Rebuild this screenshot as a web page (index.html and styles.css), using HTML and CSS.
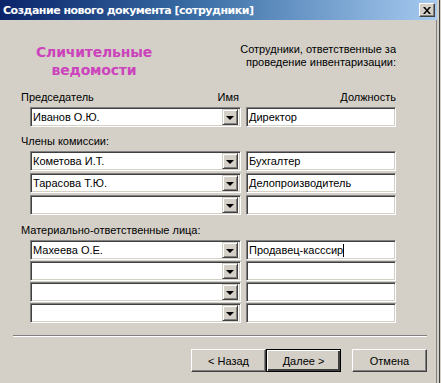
FILE: index.html
```html
<!DOCTYPE html>
<html>
<head>
    <title>Создание нового документа</title>
    <meta charset="utf-8">
    <link rel="stylesheet" href="styles.css">
</head>
<body>
    <div class="window">
        <div class="titlebar">
            <span class="title">Создание нового документа [сотрудники]</span>
            <span class="close-btn">
                <svg width="8" height="7" viewBox="0 0 8 7"><path d="M0 0h2l2 2.5L6 0h2L5 3.5 8 7H6L4 4.5 2 7H0l3-3.5z" fill="#000"/></svg>
            </span>
        </div>

        <div class="content">
            <div class="header">
                <div class="doc-name">Сличительные<br>ведомости</div>
                <div class="hint">Сотрудники, ответственные за<br>проведение инвентаризации:</div>
            </div>

            <div class="col-labels">
                <span class="lbl-main">Председатель</span>
                <span class="lbl-name">Имя</span>
                <span class="lbl-post">Должность</span>
            </div>
            <div class="rows">
                <div class="combo"><span class="value">Иванов О.Ю.</span><span class="drop"><i></i></span></div>
                <div class="field">Директор</div>
            </div>

            <div class="section-label">Члены комиссии:</div>
            <div class="rows">
                <div class="combo"><span class="value">Кометова И.Т.</span><span class="drop"><i></i></span></div>
                <div class="field">Бухгалтер</div>
                <div class="combo"><span class="value">Тарасова Т.Ю.</span><span class="drop"><i></i></span></div>
                <div class="field">Делопроизводитель</div>
                <div class="combo"><span class="value"></span><span class="drop"><i></i></span></div>
                <div class="field"></div>
            </div>

            <div class="section-label second">Материально-ответственные лица:</div>
            <div class="rows tight">
                <div class="combo"><span class="value">Махеева О.Е.</span><span class="drop"><i></i></span></div>
                <div class="field">Продавец-касссир<span class="caret"></span></div>
                <div class="combo"><span class="value"></span><span class="drop"><i></i></span></div>
                <div class="field"></div>
                <div class="combo"><span class="value"></span><span class="drop"><i></i></span></div>
                <div class="field"></div>
                <div class="combo"><span class="value"></span><span class="drop"><i></i></span></div>
                <div class="field"></div>
            </div>
        </div>

        <div class="separator"></div>

        <div class="buttons">
            <div class="btn">&lt; Назад</div>
            <div class="btn default">Далее &gt;</div>
            <div class="btn cancel">Отмена</div>
        </div>
    </div>
</body>
</html>
```

FILE: styles.css
```css
body { margin: 0; background-color: #d4d0c8; font-family: "Liberation Sans", Arial, sans-serif; font-size: 11px; color: #000; }
.window { width: 437px; height: 383px; border-right: 4px solid #d4d0c8; box-shadow: inset -1px 0 0 #808080; position: relative; background: #d4d0c8; }
.window::after { content: ""; position: absolute; top: 0; bottom: 0; right: -3px; width: 1px; background: #404040; }
.titlebar { height: 20px; display: flex; align-items: center; justify-content: space-between; padding: 0 2px 0 3px; background: linear-gradient(to right, #0a246a 0%, #3a6ea5 45%, #a6caf0 100%); }
.title { color: #fff; font-family: "DejaVu Sans", Verdana, sans-serif; font-weight: bold; font-size: 11px; letter-spacing: -0.5px; }
.close-btn { width: 16px; height: 14px; box-sizing: border-box; background: #d4d0c8; display: flex; align-items: center; justify-content: center; border-top: 1px solid #fff; border-left: 1px solid #fff; border-right: 1px solid #404040; border-bottom: 1px solid #404040; box-shadow: inset -1px -1px 0 #808080; }

.content { padding: 22px 0 0 21px; width: 375px; }
.header { display: flex; justify-content: space-between; align-items: flex-start; height: 37px; }
.doc-name { width: 146px; text-align: center; color: #cc44bb; font-family: "DejaVu Sans", Verdana, sans-serif; font-weight: bold; font-size: 14px; letter-spacing: -0.2px; line-height: 18px; margin-top: 1px; }
.hint { text-align: right; line-height: 13px; margin-top: 1px; }

.col-labels { display: flex; margin-top: 12px; height: 13px; line-height: 13px; }
.lbl-main { flex: 1; }
.lbl-post { width: 157px; text-align: right; }

.rows { display: grid; grid-template-columns: 211px 150px; column-gap: 5px; row-gap: 2px; margin: 3px 0 0 9px; grid-auto-rows: 20px; }
.rows.tight { row-gap: 1px; }
.section-label { margin-top: 8px; height: 13px; line-height: 13px; }
.section-label.second { margin-top: 9px; }

.combo, .field { box-sizing: border-box; height: 20px; background: #fff; border-top: 1px solid #808080; border-left: 1px solid #808080; border-right: 1px solid #fff; border-bottom: 1px solid #fff; box-shadow: inset 1px 1px 0 #404040, inset -1px -1px 0 #d4d0c8; }
.combo { display: flex; align-items: center; padding: 2px; }
.value { flex: 1; padding-left: 0; white-space: nowrap; }
.field { padding: 2px 0 0 2px; line-height: 15px; white-space: nowrap; }
.drop { width: 16px; height: 16px; box-sizing: border-box; background: #d4d0c8; border-top: 1px solid #d4d0c8; border-left: 1px solid #d4d0c8; border-right: 1px solid #404040; border-bottom: 1px solid #404040; box-shadow: inset 1px 1px 0 #fff, inset -1px -1px 0 #808080; display: flex; align-items: center; justify-content: center; }
.drop i { width: 0; height: 0; border-left: 4px solid transparent; border-right: 4px solid transparent; border-top: 4px solid #000; margin-top: 1px; }
.caret { display: inline-block; width: 1px; height: 13px; background: #000; vertical-align: -3px; }

.separator { margin: 12px 10px 0 13px; height: 0; border-top: 1px solid #808080; border-bottom: 1px solid #fff; }

.buttons { display: flex; justify-content: flex-end; padding: 12px 10px 0 0; }
.btn { box-sizing: border-box; width: 75px; height: 23px; display: flex; align-items: center; justify-content: center; background: #d4d0c8; border-top: 1px solid #fff; border-left: 1px solid #fff; border-right: 1px solid #404040; border-bottom: 1px solid #404040; box-shadow: inset -1px -1px 0 #808080; }
.btn.default { border: 1px solid #000; box-shadow: inset 1px 1px 0 #fff, inset -2px -2px 0 #404040; }
.btn.cancel { margin-left: 11px; }
```
